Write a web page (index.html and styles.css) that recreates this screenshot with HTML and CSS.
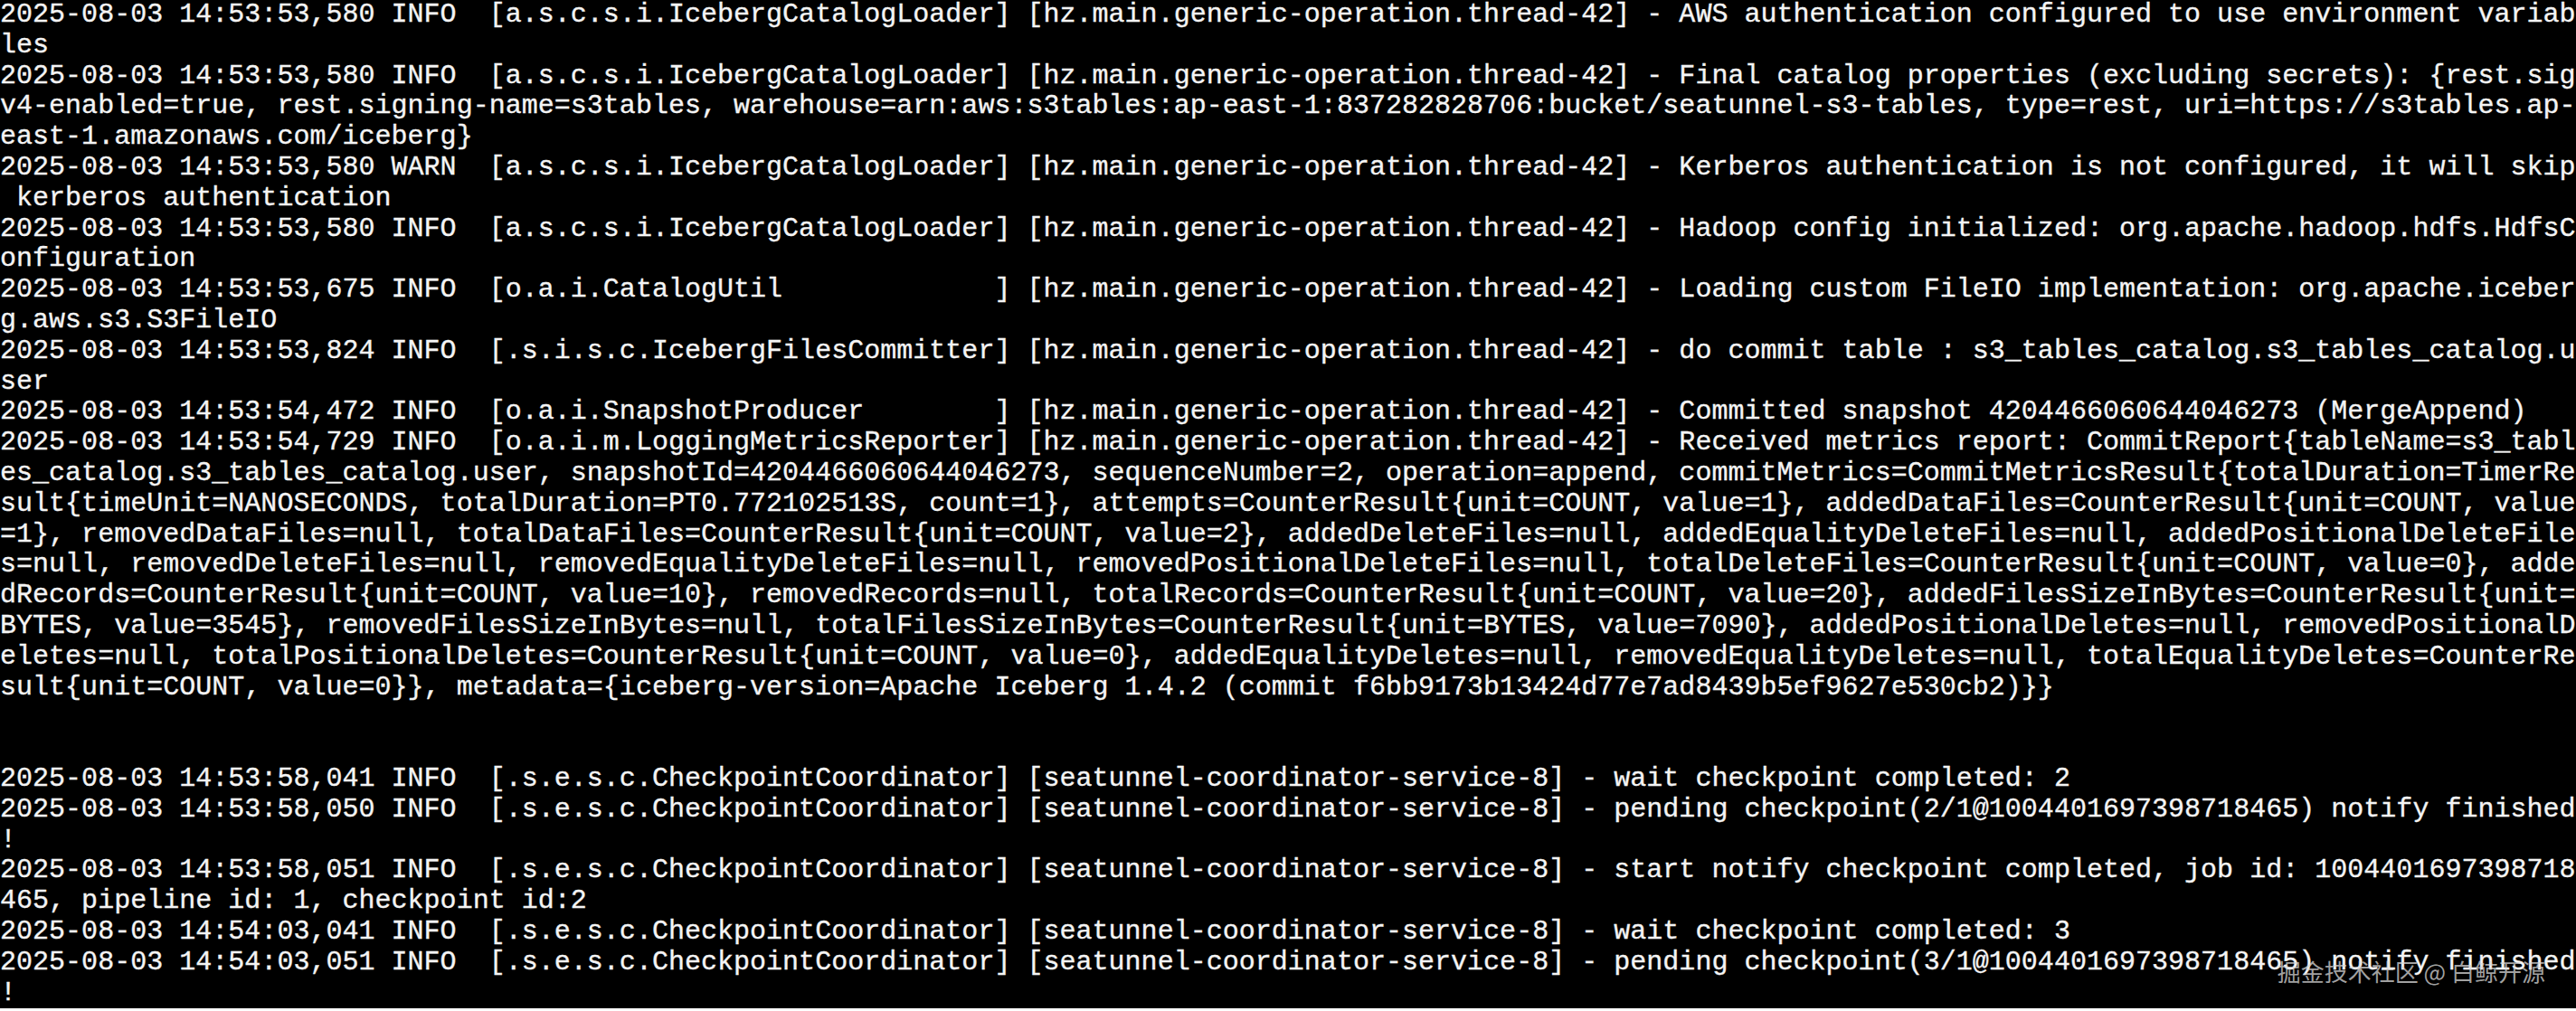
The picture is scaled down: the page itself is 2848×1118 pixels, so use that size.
FILE: index.html
```html
<!DOCTYPE html>
<html lang="zh-CN">
<head>
<meta charset="utf-8">
<title>Terminal log</title>
<link rel="stylesheet" href="styles.css">
</head>
<body>
<main class="terminal">
<div class="line">2025-08-03 14:53:53,580 INFO  [a.s.c.s.i.IcebergCatalogLoader] [hz.main.generic-operation.thread-42] - AWS authentication configured to use environment variab</div>
<div class="line">les</div>
<div class="line">2025-08-03 14:53:53,580 INFO  [a.s.c.s.i.IcebergCatalogLoader] [hz.main.generic-operation.thread-42] - Final catalog properties (excluding secrets): {rest.sig</div>
<div class="line">v4-enabled=true, rest.signing-name=s3tables, warehouse=arn:aws:s3tables:ap-east-1:837282828706:bucket/seatunnel-s3-tables, type=rest, uri=https://s3tables.ap-</div>
<div class="line">east-1.amazonaws.com/iceberg}</div>
<div class="line">2025-08-03 14:53:53,580 WARN  [a.s.c.s.i.IcebergCatalogLoader] [hz.main.generic-operation.thread-42] - Kerberos authentication is not configured, it will skip</div>
<div class="line"> kerberos authentication</div>
<div class="line">2025-08-03 14:53:53,580 INFO  [a.s.c.s.i.IcebergCatalogLoader] [hz.main.generic-operation.thread-42] - Hadoop config initialized: org.apache.hadoop.hdfs.HdfsC</div>
<div class="line">onfiguration</div>
<div class="line">2025-08-03 14:53:53,675 INFO  [o.a.i.CatalogUtil             ] [hz.main.generic-operation.thread-42] - Loading custom FileIO implementation: org.apache.iceber</div>
<div class="line">g.aws.s3.S3FileIO</div>
<div class="line">2025-08-03 14:53:53,824 INFO  [.s.i.s.c.IcebergFilesCommitter] [hz.main.generic-operation.thread-42] - do commit table : s3_tables_catalog.s3_tables_catalog.u</div>
<div class="line">ser</div>
<div class="line">2025-08-03 14:53:54,472 INFO  [o.a.i.SnapshotProducer        ] [hz.main.generic-operation.thread-42] - Committed snapshot 4204466060644046273 (MergeAppend)</div>
<div class="line">2025-08-03 14:53:54,729 INFO  [o.a.i.m.LoggingMetricsReporter] [hz.main.generic-operation.thread-42] - Received metrics report: CommitReport{tableName=s3_tabl</div>
<div class="line">es_catalog.s3_tables_catalog.user, snapshotId=4204466060644046273, sequenceNumber=2, operation=append, commitMetrics=CommitMetricsResult{totalDuration=TimerRe</div>
<div class="line">sult{timeUnit=NANOSECONDS, totalDuration=PT0.772102513S, count=1}, attempts=CounterResult{unit=COUNT, value=1}, addedDataFiles=CounterResult{unit=COUNT, value</div>
<div class="line">=1}, removedDataFiles=null, totalDataFiles=CounterResult{unit=COUNT, value=2}, addedDeleteFiles=null, addedEqualityDeleteFiles=null, addedPositionalDeleteFile</div>
<div class="line">s=null, removedDeleteFiles=null, removedEqualityDeleteFiles=null, removedPositionalDeleteFiles=null, totalDeleteFiles=CounterResult{unit=COUNT, value=0}, adde</div>
<div class="line">dRecords=CounterResult{unit=COUNT, value=10}, removedRecords=null, totalRecords=CounterResult{unit=COUNT, value=20}, addedFilesSizeInBytes=CounterResult{unit=</div>
<div class="line">BYTES, value=3545}, removedFilesSizeInBytes=null, totalFilesSizeInBytes=CounterResult{unit=BYTES, value=7090}, addedPositionalDeletes=null, removedPositionalD</div>
<div class="line">eletes=null, totalPositionalDeletes=CounterResult{unit=COUNT, value=0}, addedEqualityDeletes=null, removedEqualityDeletes=null, totalEqualityDeletes=CounterRe</div>
<div class="line">sult{unit=COUNT, value=0}}, metadata={iceberg-version=Apache Iceberg 1.4.2 (commit f6bb9173b13424d77e7ad8439b5ef9627e530cb2)}}</div>
<div class="line"> </div>
<div class="line"> </div>
<div class="line">2025-08-03 14:53:58,041 INFO  [.s.e.s.c.CheckpointCoordinator] [seatunnel-coordinator-service-8] - wait checkpoint completed: 2</div>
<div class="line">2025-08-03 14:53:58,050 INFO  [.s.e.s.c.CheckpointCoordinator] [seatunnel-coordinator-service-8] - pending checkpoint(2/1@1004401697398718465) notify finished</div>
<div class="line">!</div>
<div class="line">2025-08-03 14:53:58,051 INFO  [.s.e.s.c.CheckpointCoordinator] [seatunnel-coordinator-service-8] - start notify checkpoint completed, job id: 1004401697398718</div>
<div class="line">465, pipeline id: 1, checkpoint id:2</div>
<div class="line">2025-08-03 14:54:03,041 INFO  [.s.e.s.c.CheckpointCoordinator] [seatunnel-coordinator-service-8] - wait checkpoint completed: 3</div>
<div class="line">2025-08-03 14:54:03,051 INFO  [.s.e.s.c.CheckpointCoordinator] [seatunnel-coordinator-service-8] - pending checkpoint(3/1@1004401697398718465) notify finished</div>
<div class="line">!</div>
<div class="watermark">掘金技术社区 @ 白鲸开源</div>
</main>
</body>
</html>
```

FILE: styles.css
```css
html, body {
  margin: 0;
  padding: 0;
  background: #ffffff;
}

.terminal {
  position: relative;
  height: 1115px;
  overflow: hidden;
  background: #000000;
  color: #f4f4f4;
  font-family: "Liberation Mono", "Courier New", monospace;
  font-size: 30px;
  letter-spacing: 0.02px;
  -webkit-text-stroke: 0.35px #f4f4f4;
}

.line {
  white-space: pre;
  line-height: 33.8px;
  height: 33.8px;
}

.watermark {
  position: absolute;
  right: 34px;
  bottom: 26px;
  font-family: "Noto Sans CJK SC", "Noto Sans", sans-serif;
  font-size: 26px;
  line-height: 30px;
  letter-spacing: 0;
  color: rgba(215, 215, 215, 0.75);
  -webkit-text-stroke: 0;
  white-space: pre;
}
```
